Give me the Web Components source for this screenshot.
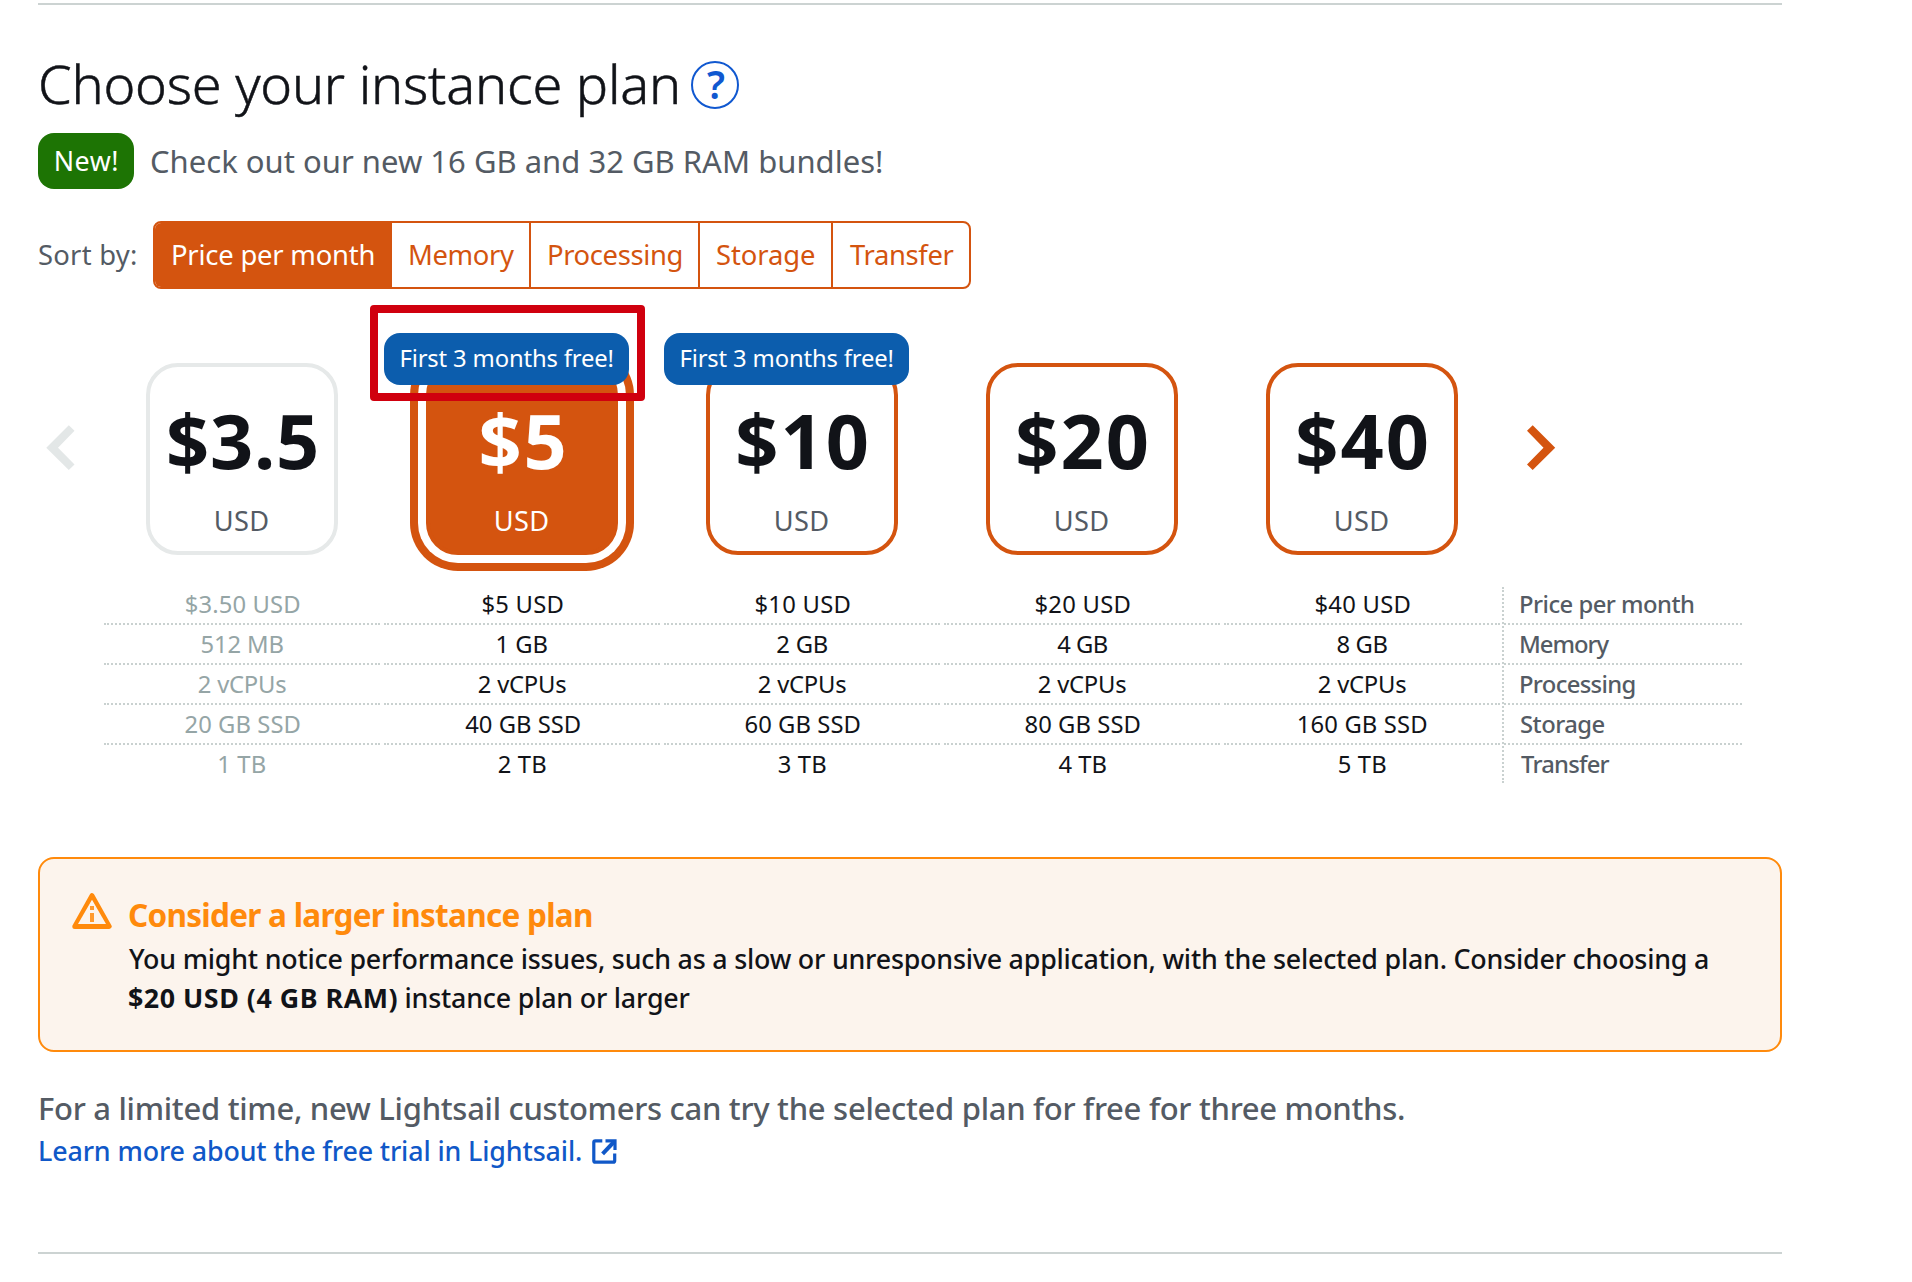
<!DOCTYPE html>
<html lang="en">
<head>
<meta charset="utf-8">
<title>Choose your instance plan</title>
<style>
  html, body { margin: 0; background: #fff; }
  body { font-family: "Noto Sans", "Open Sans", sans-serif; color: #111318; }
</style>
</head>
<body>
<plan-page></plan-page>
<script>
const define = (name, html, setup) => customElements.define(name, class extends HTMLElement {
  connectedCallback() {
    if (this.shadowRoot) return;
    const t = document.createElement('template');
    t.innerHTML = html;
    this.attachShadow({ mode: 'open' }).append(t.content.cloneNode(true));
    if (setup) setup(this, this.shadowRoot);
  }
});

/* Text run whose box is its visible ink: width in px, cap height tall. */
const pen = document.createElement('canvas').getContext('2d');
define('fit-text', `
  <style>
    :host { display: block; flex: none; height: .714em; line-height: .652em; white-space: nowrap; }
    span { display: block; line-height: inherit; }
  </style><span><slot></slot></span>`, (el, root) => {
  const size = +el.getAttribute('size'), width = +el.getAttribute('width');
  const weight = el.getAttribute('weight') || 400, text = el.textContent;
  el.style.fontSize = size + 'px';
  el.style.fontWeight = weight;
  pen.font = `${weight} ${size}px "Noto Sans", "Open Sans", sans-serif`;
  const m = pen.measureText(text);
  const ink = m.actualBoundingBoxLeft + m.actualBoundingBoxRight;
  el.style.width = width + 'px';
  const span = root.querySelector('span');
  if (text.length > 1) span.style.letterSpacing = (width - ink) / (text.length - 1) + 'px';
  span.style.marginLeft = m.actualBoundingBoxLeft + 'px';
});

define('help-button', `
  <style>
    :host { display: flex; align-items: center; justify-content: center; width: 48px; height: 48px;
      box-sizing: border-box; border: 2px solid #1058d0; border-radius: 50%; color: #1058d0; }
  </style><fit-text size="39" width="16" weight="600">?</fit-text>`);

define('new-badge', `
  <style>
    :host { display: flex; align-items: center; justify-content: center; box-sizing: border-box; width: 96px; height: 56px;
      padding: 2px 0 0 1px; border-radius: 16px; background: #1d7404; color: #fff; }
  </style><slot></slot>`);

define('sort-option', `
  <style>
    :host { display: flex; align-items: center; box-sizing: border-box; height: 64px; padding: 1px 0 0 17px;
      border-left: 2px solid #d4540f; color: #d4540f; }
    :host([active]) { background: #d4540f; color: #fff; border-left: 0; }
  </style><slot></slot>`);

define('sort-bar', `
  <style>
    :host { display: flex; align-items: center; height: 68px; }
    .label { margin: 1px 17px 0 1px; color: #545b64; }
    .group { display: flex; border: 2px solid #d4540f; border-radius: 8px; overflow: hidden; }
    sort-option:nth-child(1) { width: 237px; padding-left: 18px; }
    sort-option:nth-child(2) { border-left: 0; padding-left: 18px; width: 137px; }
    sort-option:nth-child(3) { width: 169px; padding-left: 18px; }
    sort-option:nth-child(4) { width: 133px; }
    sort-option:nth-child(5) { width: 138px; }
  </style>
  <div class="label"><fit-text size="27.4" width="97">Sort by:</fit-text></div>
  <div class="group">
    <sort-option active><fit-text size="27.4" width="200.5">Price per month</fit-text></sort-option>
    <sort-option><fit-text size="27.4" width="104">Memory</fit-text></sort-option>
    <sort-option><fit-text size="27.4" width="132.5">Processing</fit-text></sort-option>
    <sort-option><fit-text size="27.4" width="98">Storage</fit-text></sort-option>
    <sort-option><fit-text size="27.4" width="103.5">Transfer</fit-text></sort-option>
  </div>`);

define('trial-badge', `
  <style>
    :host { display: flex; align-items: center; justify-content: center; box-sizing: border-box; width: 245px; height: 52px;
      padding: 1px 0 0 1px; border-radius: 16px; background: #0c5dad; color: #fff; }
  </style><fit-text size="23.8" width="211">First 3 months free!</fit-text>`);

define('plan-card', `
  <style>
    :host { display: flex; flex-direction: column; align-items: center; position: relative; flex: none;
      box-sizing: border-box; width: 192px; height: 192px; padding-top: 48px; gap: 43px;
      border: 4px solid #d4540f; border-radius: 32px; background: #fff; }
    :host([disabled]) { border-color: #e6e9e9; }
    :host([selected]) { background: #d4540f; color: #fff;
      box-shadow: 0 0 0 8px #fff, 0 0 0 16px #d4540f; }
    .unit { color: #545b64; }
    :host([selected]) .unit { color: #fff; }
    ::slotted([slot="price"]) { margin-left: 1px; }
    ::slotted(trial-badge) { position: absolute; left: -46px; top: -34px; }
    ::slotted(.marker) { position: absolute; left: -60.5px; top: -62.5px; box-sizing: border-box;
      width: 275.5px; height: 96.5px; border: 8px solid #d0000e; border-radius: 4px; }
  </style>
  <slot name="price"></slot>
  <fit-text class="unit" size="27.2" width="52.5">USD</fit-text>
  <slot></slot>`);

define('plan-carousel', `
  <style>
    :host { display: flex; align-items: flex-start; height: 192px; padding-left: 8px; }
    svg { flex: none; margin-top: 62px; }
    .cards { display: flex; gap: 88px; margin: 0 69px 0 71px; }
  </style>
  <svg width="29" height="45" viewBox="0 0 29 45"><path d="M22.8 0.3 L28.5 5.8 L12 22.7 L28.5 39.4 L22.8 45 L0.3 22.7 Z" fill="#e3e7e7"/></svg>
  <div class="cards">
    <plan-card disabled><fit-text slot="price" size="75.6" width="147" weight="700">$3.5</fit-text></plan-card>
    <plan-card selected><fit-text slot="price" size="75.6" width="82" weight="700">$5</fit-text><trial-badge></trial-badge><div class="marker"></div></plan-card>
    <plan-card><fit-text slot="price" size="75.6" width="128.5" weight="700">$10</fit-text><trial-badge></trial-badge></plan-card>
    <plan-card><fit-text slot="price" size="75.6" width="128.5" weight="700">$20</fit-text></plan-card>
    <plan-card><fit-text slot="price" size="75.6" width="128.5" weight="700">$40</fit-text></plan-card>
  </div>
  <svg width="29" height="45" viewBox="0 0 29 45"><path d="M5.7 0.3 L0 5.8 L16.5 22.7 L0 39.4 L5.7 45 L28.2 22.7 Z" fill="#d4540f"/></svg>`);

const specs = [
  [['$3.50 USD', 113.5], ['512 MB', 82], ['2 vCPUs', 87.5], ['20 GB SSD', 114], ['1 TB', 46.5]],
  [['$5 USD', 80], ['1 GB', 50], ['2 vCPUs', 87.5], ['40 GB SSD', 114.5], ['2 TB', 47.5]],
  [['$10 USD', 94], ['2 GB', 50.5], ['2 vCPUs', 87.5], ['60 GB SSD', 114], ['3 TB', 47.5]],
  [['$20 USD', 94], ['4 GB', 50.5], ['2 vCPUs', 87.5], ['80 GB SSD', 114], ['4 TB', 48]],
  [['$40 USD', 94], ['8 GB', 50], ['2 vCPUs', 87.5], ['160 GB SSD', 127.5], ['5 TB', 47.5]],
  [['Price per month', 173], ['Memory', 88.5], ['Processing', 113.5], ['Storage', 83.5], ['Transfer', 88.5]]
];
define('spec-column', `
  <style>
    :host { display: flex; flex-direction: column; flex: none; width: 276px; }
    .row { display: flex; align-items: center; justify-content: center; box-sizing: border-box;
      height: 40px; padding: 3px 0 0 1px; border-bottom: 2px dotted #c9d1d0; }
    .row:first-of-type { height: 38px; padding-top: 1px; }
    .row:last-of-type { height: 38px; border-bottom: 0; }
    :host([disabled]) { color: #95a5a6; }
    :host([labels]) { width: 238px; border-left: 2px dotted #c9d1d0; color: #545b64; margin-left: -2px; }
    :host([labels]) .row { justify-content: flex-start; padding-left: 17px; }
  </style>`, (el, root) => {
  const i = +el.getAttribute('index');
  for (const [text, width] of specs[i]) {
    const row = document.createElement('div');
    row.className = 'row';
    row.innerHTML = `<fit-text size="23.8" width="${width}" weight="${i === 5 ? 500 : 400}">${text}</fit-text>`;
    root.append(row);
  }
});

define('spec-table', `
  <style>:host { display: flex; gap: 4px; margin-left: 66px; }</style>
  <spec-column index="0" disabled></spec-column>
  <spec-column index="1"></spec-column>
  <spec-column index="2"></spec-column>
  <spec-column index="3"></spec-column>
  <spec-column index="4"></spec-column>
  <spec-column index="5" labels></spec-column>`);

define('plan-alert', `
  <style>
    :host { display: flex; box-sizing: border-box; height: 195px; padding: 34px 32px;
      border: 2px solid #ff8a0c; border-radius: 16px; background: #fcf4ed; }
    svg { flex: none; }
    .copy { display: flex; flex-direction: column; margin: 12px 0 0 17px; }
    .title { color: #ff8a0c; margin-bottom: 22.5px; }
    .line { display: flex; gap: 9px; margin-bottom: 19.4px; }
  </style>
  <svg width="40" height="36" viewBox="0 0 40 36" fill="none">
    <path d="M20 2.6 L37.2 33.4 H2.8 Z" stroke="#ff8a0c" stroke-width="5" stroke-linejoin="round"/>
    <path d="M20 6.8 L34 31 H6 Z" fill="#fcf4ed"/>
    <path d="M18 13h4v4h-4zM18 20h4v9h-4z" fill="#ff8a0c" opacity=".85"/>
  </svg>
  <div class="copy">
    <fit-text class="title" size="31.5" width="463" weight="700">Consider a larger instance plan</fit-text>
    <div class="line"><fit-text size="26.8" width="1579" weight="500">You might notice performance issues, such as a slow or unresponsive application, with the selected plan. Consider choosing a</fit-text></div>
    <div class="line"><fit-text size="26.8" width="268.5" weight="700">$20 USD (4 GB RAM)</fit-text><fit-text size="26.8" width="283" weight="500">instance plan or larger</fit-text></div>
  </div>`);

define('trial-note', `
  <style>
    :host { display: flex; flex-direction: column; gap: 19px; padding-left: 2px; color: #545b64; }
    .link { display: flex; align-items: center; gap: 11px; height: 26px; color: #1058c8; }
  </style>
  <fit-text size="31" width="1364" weight="500">For a limited time, new Lightsail customers can try the selected plan for free for three months.</fit-text>
  <div class="link">
    <fit-text size="26.8" width="541" weight="500">Learn more about the free trial in Lightsail.</fit-text>
    <svg width="25" height="25" viewBox="0 0 25 25" fill="none" stroke="#1058c8" stroke-width="3.2">
      <path d="M10.3 1.8H3.3Q1.8 1.8 1.8 3.3V21.7Q1.8 23.2 3.3 23.2H21.2Q22.7 23.2 22.7 21.7V14.5"/>
      <path d="M13.5 1.8H23V11"/><path d="M22.3 2.5L10.6 14.8" stroke-width="4"/>
    </svg>
  </div>`);

define('plan-page', `
  <style>
    :host { display: flex; flex-direction: column; box-sizing: border-box; width: 1782px; height: 1282px;
      padding: 3px 0 0 38px; overflow: hidden; }
    .rule { flex: none; height: 2px; background: #ccd3d2; }
    .heading { display: flex; align-items: center; gap: 14px; height: 48px; margin-top: 56px; padding-left: 3px; }
    .heading fit-text { -webkit-text-stroke: .5px currentColor; margin-top: 1px; }
    .promo { display: flex; align-items: center; gap: 17px; height: 56px; margin-top: 24px; color: #545b64; }
    .promo > fit-text { margin-top: 2px; }
    sort-bar { margin-top: 32px; }
    plan-carousel { margin-top: 74px; }
    spec-table { margin-top: 32px; }
    plan-alert { margin-top: 74px; flex: none; }
    trial-note { margin: 45.5px 0 auto; }
    .rule.end { margin-bottom: 28px; }
  </style>
  <div class="rule"></div>
  <div class="heading"><fit-text size="54" width="636" weight="300">Choose your instance plan</fit-text><help-button></help-button></div>
  <div class="promo"><new-badge><fit-text size="26.8" width="61.5">New!</fit-text></new-badge><fit-text size="31" width="731">Check out our new 16 GB and 32 GB RAM bundles!</fit-text></div>
  <sort-bar></sort-bar>
  <plan-carousel></plan-carousel>
  <spec-table></spec-table>
  <plan-alert></plan-alert>
  <trial-note></trial-note>
  <div class="rule end"></div>`);
</script>
</body>
</html>
